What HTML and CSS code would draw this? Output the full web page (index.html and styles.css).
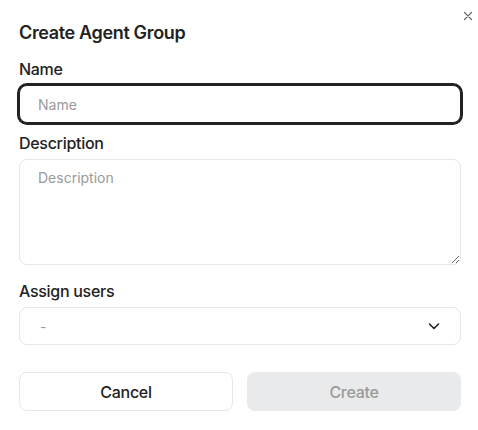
FILE: index.html
```html
<!DOCTYPE html>
<html lang="en">
<head>
    <meta charset="UTF-8">
    <meta name="viewport" content="width=device-width, initial-scale=1.0">
    <title>Create Agent Group</title>
    <link rel="stylesheet" href="styles.css">
</head>
<body>
    <div class="modal">
        <button class="close-btn" aria-label="Close">
            <svg width="10" height="10" viewBox="0 0 10 10">
                <path d="M1.5 1.5L8.5 8.5M8.5 1.5L1.5 8.5" stroke="#6b6b6b" stroke-width="1.2" stroke-linecap="round"/>
            </svg>
        </button>

        <h2>Create Agent Group</h2>

        <label for="groupName">Name</label>
        <input type="text" id="groupName" class="field" placeholder="Name" autofocus>

        <label for="groupDescription">Description</label>
        <textarea id="groupDescription" class="field textarea" placeholder="Description"></textarea>

        <label for="groupUsers">Assign users</label>
        <div class="select" id="groupUsers">
            <span class="select-value">-</span>
            <svg width="14" height="14" viewBox="0 0 14 14">
                <path d="M2.5 5L7 9.5L11.5 5" fill="none" stroke="#222" stroke-width="1.6" stroke-linecap="round" stroke-linejoin="round"/>
            </svg>
        </div>

        <div class="actions">
            <button class="btn btn-cancel">Cancel</button>
            <button class="btn btn-create" disabled>Create</button>
        </div>
    </div>
</body>
</html>
```

FILE: styles.css
```css
body {
    font-family: Inter, "Noto Sans", sans-serif;
    background-color: #ffffff;
    color: #222222;
    margin: 0;
    padding: 0;
}

.modal {
    position: relative;
    padding: 19px 18px 20px 19px;
    width: 442px;
}

.close-btn {
    position: absolute;
    top: 11px;
    right: 6px;
    width: 10px;
    height: 10px;
    padding: 0;
    border: none;
    background: none;
    cursor: pointer;
    display: flex;
}

h2 {
    margin: 0 0 10px;
    font-size: 18px;
    line-height: 28px;
    font-weight: 600;
    letter-spacing: -0.35px;
}

label {
    display: block;
    font-size: 16px;
    line-height: 24px;
    font-weight: 500;
    letter-spacing: -0.3px;
    margin-bottom: 4px;
}

.field {
    display: block;
    box-sizing: border-box;
    width: 100%;
    height: 38px;
    padding: 0 18px;
    margin-bottom: 8px;
    border: 1px solid #e5e7eb;
    border-radius: 8px;
    font-family: inherit;
    font-size: 14px;
    color: #222222;
    outline: none;
}

.field::placeholder {
    color: #9a9a9a;
}

.field:focus {
    border-color: #222222;
    box-shadow: 0 0 0 2px #222222;
}

.textarea {
    height: 106px;
    padding: 8px 18px;
    line-height: 20px;
    margin-bottom: 14px;
}

.select {
    box-sizing: border-box;
    height: 38px;
    display: flex;
    align-items: center;
    justify-content: space-between;
    padding: 0 19px 0 20px;
    border: 1px solid #e5e7eb;
    border-radius: 8px;
    font-size: 14px;
    color: #9a9a9a;
}

.actions {
    display: grid;
    grid-template-columns: 1fr 1fr;
    gap: 14px;
    margin-top: 27px;
}

.btn {
    height: 39px;
    border-radius: 8px;
    font-family: inherit;
    font-size: 16px;
    font-weight: 500;
    letter-spacing: -0.3px;
    cursor: pointer;
}

.btn-cancel {
    background-color: #ffffff;
    border: 1px solid #e5e7eb;
    color: #222222;
}

.btn-create {
    background-color: #e9eaeb;
    border: none;
    color: #9a9a9a;
    cursor: default;
}
```
